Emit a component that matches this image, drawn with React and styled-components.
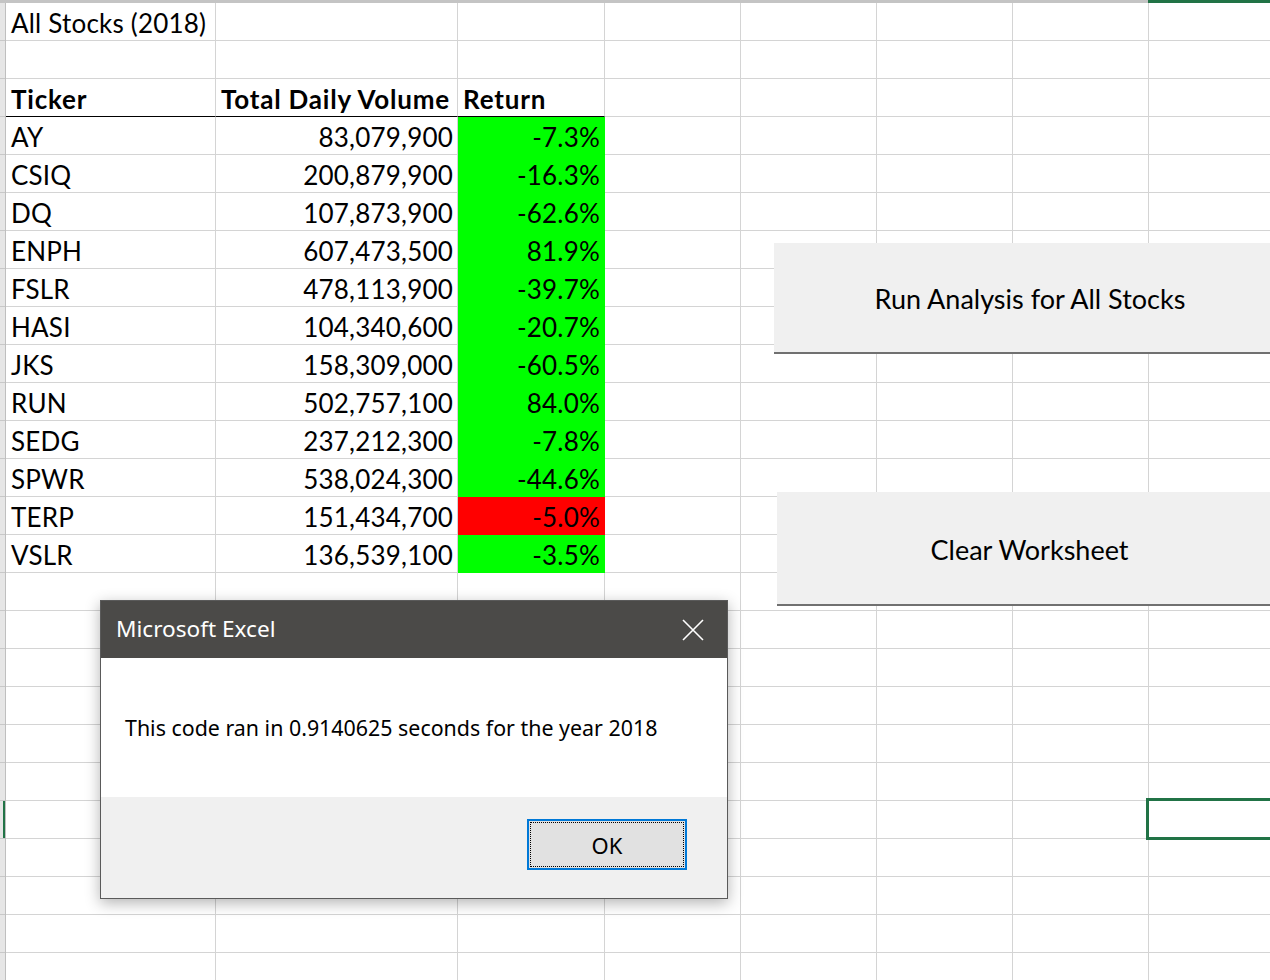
import styled, { createGlobalStyle } from 'styled-components';

const GlobalStyle = createGlobalStyle`
  body {
    margin: 0;
    background: #fff;
    overflow: hidden;
  }
`;

const COLS = [210, 242, 147, 136, 136, 136, 136, 136];
const ROW_COUNT = 26;
const SELECTED_ROW = 21;

const stocks = [
  ['AY', '83,079,900', '-7.3%'],
  ['CSIQ', '200,879,900', '-16.3%'],
  ['DQ', '107,873,900', '-62.6%'],
  ['ENPH', '607,473,500', '81.9%'],
  ['FSLR', '478,113,900', '-39.7%'],
  ['HASI', '104,340,600', '-20.7%'],
  ['JKS', '158,309,000', '-60.5%'],
  ['RUN', '502,757,100', '84.0%'],
  ['SEDG', '237,212,300', '-7.8%'],
  ['SPWR', '538,024,300', '-44.6%'],
  ['TERP', '151,434,700', '-5.0%'],
  ['VSLR', '136,539,100', '-3.5%'],
];

// every row is 8 cells; empty cells are plain grid
const buildRows = () => {
  const rows = [];
  for (let r = 0; r < ROW_COUNT; r++) {
    const cells = COLS.map(() => ({ text: '' }));
    if (r === 0) cells[0] = { text: 'All Stocks (2018)' };
    if (r === 2) {
      cells[0] = { text: 'Ticker', bold: true, underline: true };
      cells[1] = { text: 'Total Daily Volume', bold: true, underline: true };
      cells[2] = { text: 'Return', bold: true, underline: true };
    }
    const s = stocks[r - 3];
    if (s) {
      cells[0] = { text: s[0] };
      cells[1] = { text: s[1], right: true };
      cells[2] = { text: s[2], right: true, fill: s[0] === 'TERP' ? '#ff0000' : '#00ff00' };
    }
    rows.push(cells);
  }
  return rows;
};

const App = () => {
  const rows = buildRows();
  return (
    <>
      <GlobalStyle />
      <Sheet>
        <ColumnEdge>
          <ColumnMark />
        </ColumnEdge>
        <Body>
          <RowHeaders>
            {rows.map((_, i) => (
              <RowHead key={i} $selected={i === SELECTED_ROW} />
            ))}
          </RowHeaders>
          <Grid>
            {rows.map((cells, r) =>
              cells.map((c, ci) => (
                <Cell
                  key={r + '-' + ci}
                  $right={c.right}
                  $bold={c.bold}
                  $fill={c.fill}
                  $underline={c.underline}
                >
                  {c.text}
                </Cell>
              ))
            )}
          </Grid>
        </Body>

        <MacroButton $left={774} $top={243} $width={512} $height={111}>
          Run Analysis for All Stocks
        </MacroButton>
        <MacroButton $left={777} $top={492} $width={505} $height={114}>
          Clear Worksheet
        </MacroButton>

        <ActiveCell />

        <Dialog>
          <TitleBar>
            <TitleText>Microsoft Excel</TitleText>
            <CloseButton>
              <svg width="22" height="22" viewBox="0 0 22 22">
                <path d="M1 1 L21 21 M21 1 L1 21" stroke="#fff" strokeWidth="1.6" fill="none" />
              </svg>
            </CloseButton>
          </TitleBar>
          <Message>This code ran in 0.9140625 seconds for the year 2018</Message>
          <Footer>
            <OkButton>
              <FocusRing>OK</FocusRing>
            </OkButton>
          </Footer>
        </Dialog>
      </Sheet>
    </>
  );
};

export default App;

const Sheet = styled.div`
  position: relative;
  width: 1270px;
  height: 980px;
  overflow: hidden;
  background: #fff;
`;

const ColumnEdge = styled.div`
  height: 3px;
  background: #c4c4c4;
  display: flex;
  justify-content: flex-end;
`;

const ColumnMark = styled.div`
  width: 122px;
  height: 3px;
  background: #217346;
`;

const Body = styled.div`
  display: flex;
  align-items: flex-start;
`;

const RowHeaders = styled.div`
  width: 5px;
  flex: none;
  background: #e6e6e6;
  border-right: 1px solid #bfbfbf;
`;

const RowHead = styled.div`
  height: 37px;
  border-bottom: 1px solid #c8c8c8;
  box-shadow: ${(p) => (p.$selected ? 'inset -2px 0 0 #217346' : 'none')};
`;

const Grid = styled.div`
  display: grid;
  grid-template-columns: ${COLS.map((w) => w + 'px').join(' ')};
  grid-auto-rows: 38px;
  flex: none;
`;

const Cell = styled.div`
  box-sizing: border-box;
  border-right: 1px solid ${(p) => p.$fill || '#d4d4d4'};
  border-bottom: 1px solid ${(p) => (p.$underline ? '#000' : p.$fill || '#d4d4d4')};
  background: ${(p) => p.$fill || '#fff'};
  padding: 2px 4px 0 5px;
  font-family: Lato, 'Liberation Sans', sans-serif;
  font-size: 26px;
  font-weight: ${(p) => (p.$bold ? 700 : 400)};
  letter-spacing: ${(p) => (p.$bold ? '0.8px' : '0.2px')};
  line-height: 37px;
  color: #000;
  text-align: ${(p) => (p.$right ? 'right' : 'left')};
  white-space: nowrap;
  overflow: visible;
`;

const MacroButton = styled.div`
  position: absolute;
  left: ${(p) => p.$left}px;
  top: ${(p) => p.$top}px;
  width: ${(p) => p.$width}px;
  height: ${(p) => p.$height}px;
  box-sizing: border-box;
  background: #f0f0f0;
  border-bottom: 2px solid #707070;
  display: flex;
  align-items: center;
  justify-content: center;
  padding-top: 2px;
  font-family: Lato, 'Liberation Sans', sans-serif;
  font-size: 27px;
  color: #000;
`;

const ActiveCell = styled.div`
  position: absolute;
  left: 1146px;
  top: 798px;
  width: 140px;
  height: 42px;
  box-sizing: border-box;
  border: 3px solid #217346;
`;

const Dialog = styled.div`
  position: absolute;
  left: 100px;
  top: 600px;
  width: 628px;
  height: 299px;
  box-sizing: border-box;
  border: 1px solid #5a5a5a;
  background: #fff;
  box-shadow: 0 4px 14px rgba(0, 0, 0, 0.3);
  display: flex;
  flex-direction: column;
  font-family: 'Noto Sans', 'Open Sans', sans-serif;
`;

const TitleBar = styled.div`
  height: 57px;
  flex: none;
  background: #4b4a48;
  display: flex;
  align-items: center;
  justify-content: space-between;
  padding: 0 23px 0 15px;
`;

const TitleText = styled.div`
  color: #fff;
  font-size: 22.6px;
  padding-bottom: 2px;
`;

const CloseButton = styled.div`
  width: 22px;
  height: 22px;
  display: flex;
`;

const Message = styled.div`
  height: 139px;
  flex: none;
  display: flex;
  align-items: center;
  padding-left: 24px;
  font-size: 21.4px;
  color: #000;
`;

const Footer = styled.div`
  flex: 1;
  background: #f0f0f0;
  display: flex;
  justify-content: flex-end;
  align-items: flex-start;
  padding: 22px 40px 0 0;
`;

const OkButton = styled.div`
  width: 160px;
  height: 51px;
  box-sizing: border-box;
  border: 2px solid #0078d7;
  background: #e1e1e1;
  padding: 1px;
  display: flex;
`;

const FocusRing = styled.div`
  flex: 1;
  border: 1px dotted #000;
  display: flex;
  align-items: center;
  justify-content: center;
  font-size: 22px;
  color: #000;
`;
